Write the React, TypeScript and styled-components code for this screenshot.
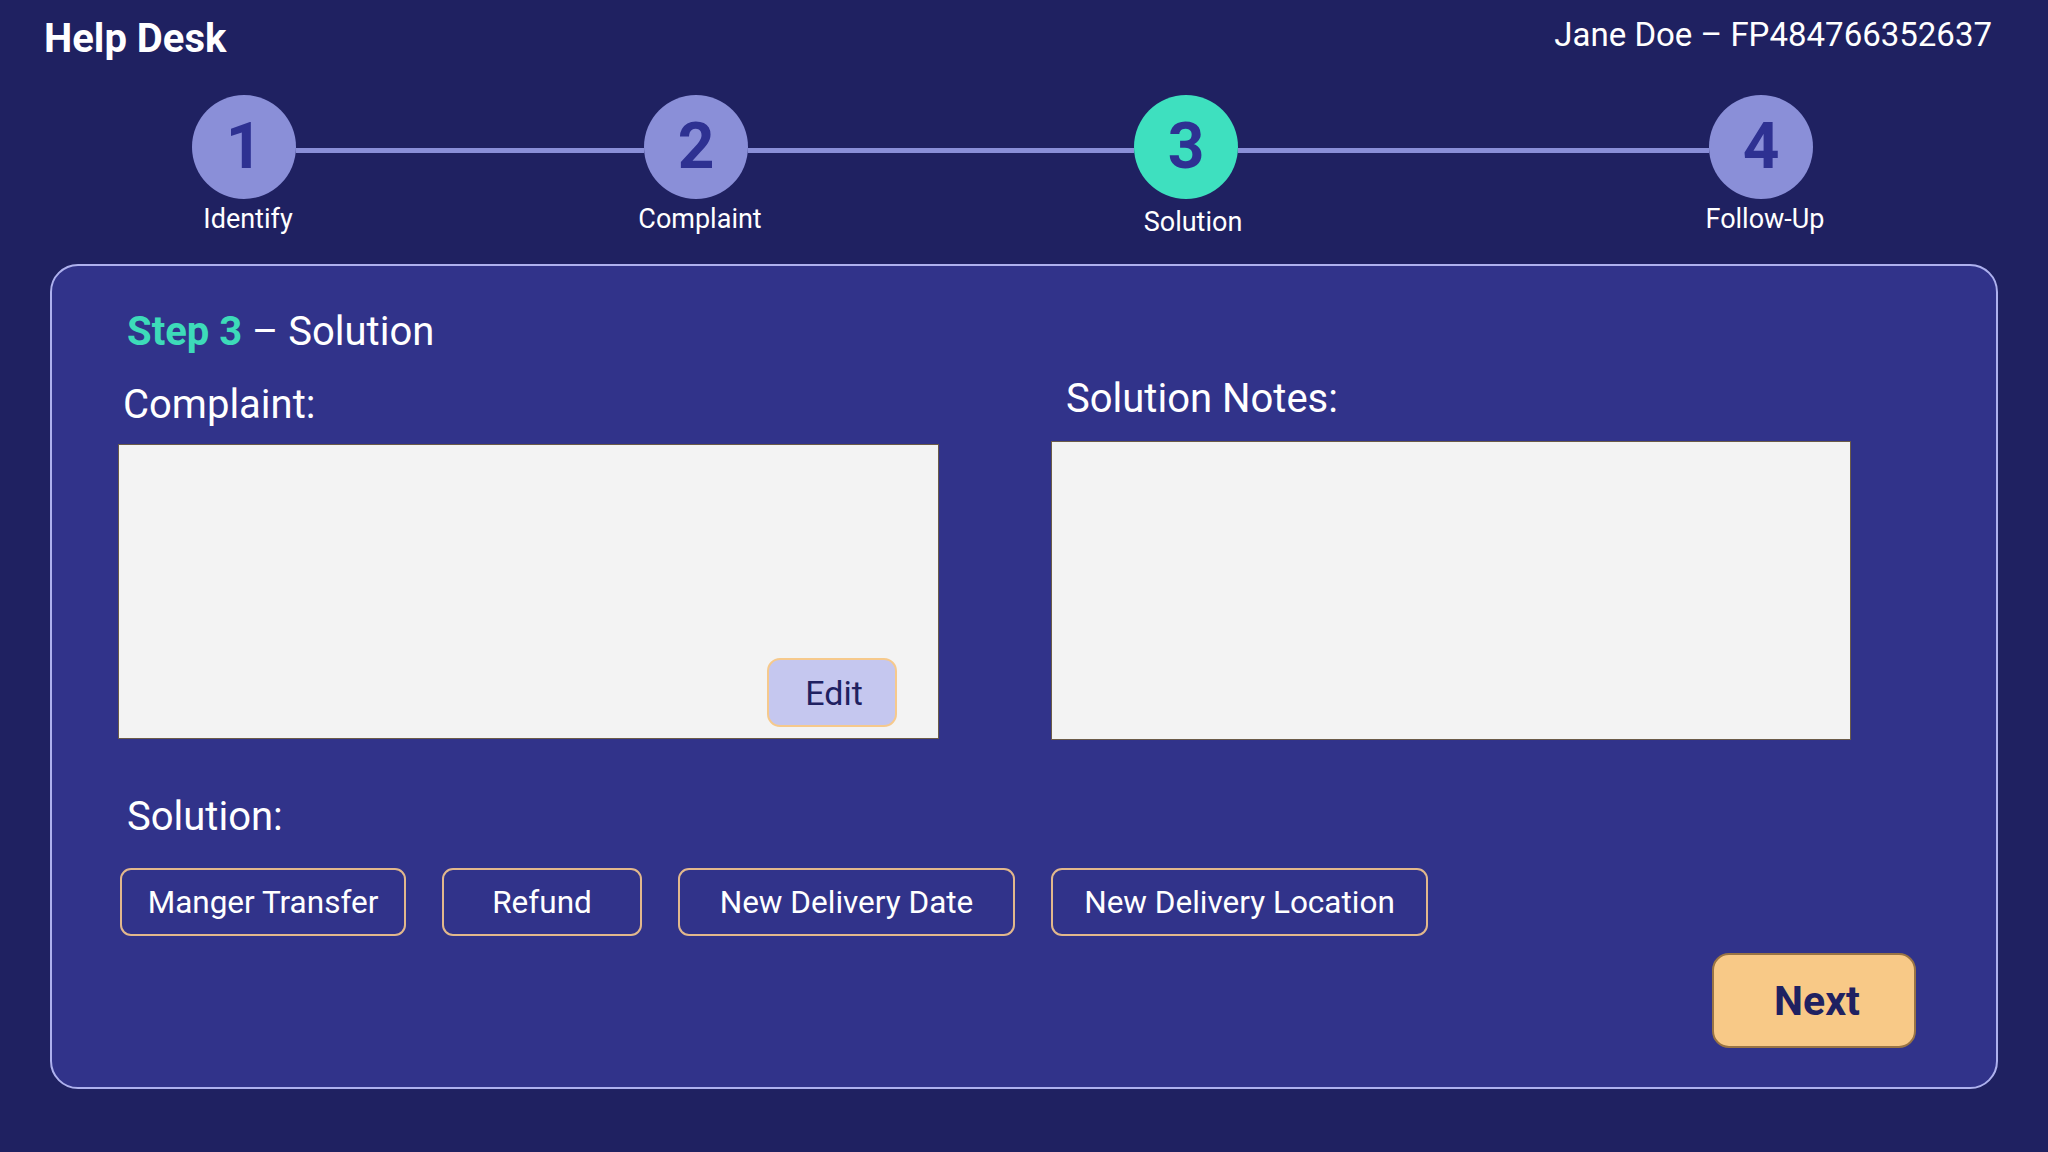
import styled, { createGlobalStyle } from 'styled-components';

const GlobalStyle = createGlobalStyle`
  html, body {
    margin: 0;
    padding: 0;
    background: #1f2161;
  }
  body {
    font-family: Roboto, "Noto Sans", sans-serif;
    color: #ffffff;
  }
`;

interface StepData {
    num: number;
    label: string;
    active?: boolean;
}

const steps: StepData[] = [
    { num: 1, label: 'Identify' },
    { num: 2, label: 'Complaint' },
    { num: 3, label: 'Solution', active: true },
    { num: 4, label: 'Follow-Up' },
];

// distance between circle edges
const connectorWidths = [348, 386, 471];

const solutions = [
    { label: 'Manger Transfer', width: 286 },
    { label: 'Refund', width: 200 },
    { label: 'New Delivery Date', width: 337 },
    { label: 'New Delivery Location', width: 377 },
];

export default function App() {
    return (
        <Page>
            <GlobalStyle />
            <Header>
                <Brand>Help Desk</Brand>
                <Customer>Jane Doe – FP484766352637</Customer>
            </Header>

            <Stepper>
                {steps.map((s, i) => (
                    <StepGroup key={s.num}>
                        <Step>
                            <Circle $active={s.active}>{s.num}</Circle>
                            <StepLabel $active={s.active}>{s.label}</StepLabel>
                        </Step>
                        {i < connectorWidths.length && <Connector $width={connectorWidths[i]} />}
                    </StepGroup>
                ))}
            </Stepper>

            <Panel>
                <Title>
                    <TitleAccent>Step 3</TitleAccent> – Solution
                </Title>

                <Columns>
                    <Column $width={821}>
                        <FieldLabel $indent={5}>Complaint:</FieldLabel>
                        <TextBox $height={295}>
                            <EditButton>Edit</EditButton>
                        </TextBox>
                    </Column>
                    <Column $width={800} $shift={-6}>
                        <FieldLabel $indent={15} $gap={18}>Solution Notes:</FieldLabel>
                        <TextBox $height={299} />
                    </Column>
                </Columns>

                <SectionLabel>Solution:</SectionLabel>
                <OptionRow>
                    {solutions.map((o) => (
                        <OptionButton key={o.label} $width={o.width}>
                            {o.label}
                        </OptionButton>
                    ))}
                </OptionRow>

                <Footer>
                    <NextButton>Next</NextButton>
                </Footer>
            </Panel>
        </Page>
    );
}

const Page = styled.div`
    width: 2048px;
    height: 1152px;
    box-sizing: border-box;
    padding: 15px 50px 0;
    background: #1f2161;
    overflow: hidden;
`;

const Header = styled.header`
    display: flex;
    justify-content: space-between;
    align-items: flex-start;
    padding: 0 6px 0 0;
    margin-left: -6px;
`;

const Brand = styled.h1`
    margin: 0;
    font-size: 40px;
    line-height: 48px;
    font-weight: 700;
    color: #ffffff;
`;

const Customer = styled.div`
    font-size: 33px;
    line-height: 40px;
    font-weight: 400;
    color: #ffffff;
`;

const Stepper = styled.div`
    display: flex;
    align-items: flex-start;
    margin-top: 32px;
    padding-left: 142px;
    height: 140px;
`;

const StepGroup = styled.div`
    display: flex;
    align-items: flex-start;
`;

const Step = styled.div`
    width: 104px;
    display: flex;
    flex-direction: column;
    align-items: center;
`;

const Circle = styled.div<{ $active?: boolean }>`
    width: 104px;
    height: 104px;
    border-radius: 50%;
    background: ${(p) => (p.$active ? '#3ee0bf' : '#8a8fd8')};
    color: #2e3192;
    font-size: 64px;
    font-weight: 700;
    display: flex;
    align-items: center;
    justify-content: center;
    line-height: 1;
`;

const StepLabel = styled.div<{ $active?: boolean }>`
    margin-top: ${(p) => (p.$active ? '7px' : '4px')};
    margin-left: ${(p) => (p.$active ? '14px' : '8px')};
    font-size: 27px;
    line-height: 32px;
    white-space: nowrap;
    color: #ffffff;
`;

const Connector = styled.div<{ $width: number }>`
    width: ${(p) => p.$width}px;
    height: 5px;
    margin-top: 53px;
    background: #8a8fd8;
`;

const Panel = styled.section`
    margin-top: 29px;
    box-sizing: border-box;
    height: 825px;
    border: 2px solid #aeb1ee;
    border-radius: 28px;
    background: #31338a;
    padding: 42px 80px 40px 66px;
    display: flex;
    flex-direction: column;
`;

const Title = styled.h2`
    margin: 0 0 0 9px;
    font-size: 40px;
    line-height: 48px;
    font-weight: 400;
    color: #ffffff;
`;

const TitleAccent = styled.span`
    font-weight: 700;
    color: #3ddbb9;
`;

const Columns = styled.div`
    display: flex;
    align-items: flex-start;
    gap: 112px;
    margin-top: 25px;
`;

const Column = styled.div<{ $width: number; $shift?: number }>`
    width: ${(p) => p.$width}px;
    display: flex;
    flex-direction: column;
    margin-top: ${(p) => p.$shift ?? 0}px;
`;

const FieldLabel = styled.div<{ $indent: number; $gap?: number }>`
    font-size: 40px;
    line-height: 48px;
    margin: 0 0 ${(p) => p.$gap ?? 15}px ${(p) => p.$indent}px;
    color: #ffffff;
`;

const TextBox = styled.div<{ $height: number }>`
    box-sizing: border-box;
    height: ${(p) => p.$height}px;
    background: #f3f3f3;
    border: 1.5px solid #6b5b48;
    display: flex;
    align-items: flex-end;
    justify-content: flex-end;
    padding: 0 41px 11px 0;
`;

const EditButton = styled.button`
    box-sizing: border-box;
    width: 130px;
    height: 69px;
    border-radius: 13px;
    border: 2px solid #f6c98c;
    background: #c5c7ef;
    color: #1f2161;
    font-family: Roboto, sans-serif;
    font-size: 34px;
    padding: 0 0 0 4px;
    cursor: pointer;
`;

const SectionLabel = styled.div`
    margin: 53px 0 0 9px;
    font-size: 40px;
    line-height: 48px;
    color: #ffffff;
`;

const OptionRow = styled.div`
    display: flex;
    align-items: center;
    gap: 36px;
    margin: 27px 0 0 2px;
`;

const OptionButton = styled.button<{ $width: number }>`
    box-sizing: border-box;
    width: ${(p) => p.$width}px;
    height: 68px;
    border: 2px solid #e2b88c;
    border-radius: 11px;
    background: transparent;
    color: #ffffff;
    font-family: Roboto, sans-serif;
    font-size: 31.5px;
    padding: 0;
    cursor: pointer;
`;

const Footer = styled.div`
    display: flex;
    justify-content: flex-end;
    margin-top: 17px;
`;

const NextButton = styled.button`
    box-sizing: border-box;
    width: 204px;
    height: 95px;
    border-radius: 17px;
    border: 2px solid #9a7444;
    background: #f8c987;
    color: #1f2161;
    font-family: Roboto, sans-serif;
    font-size: 41px;
    font-weight: 700;
    padding: 0 0 0 6px;
    cursor: pointer;
`;
